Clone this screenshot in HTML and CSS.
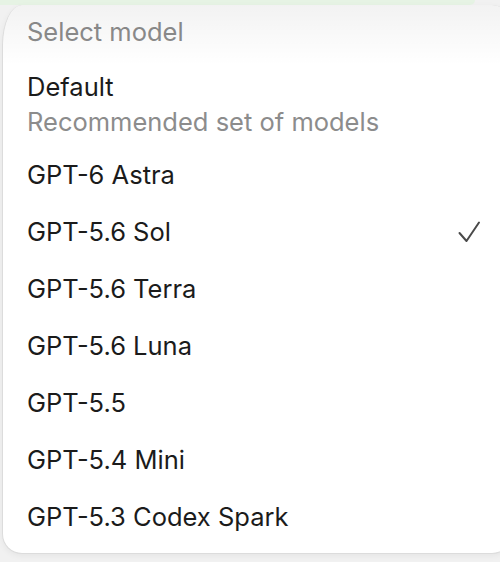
FILE: index.html
```html
<!DOCTYPE html>
<html>
<head>
<meta charset="utf-8">
<link rel="stylesheet" href="styles.css">
</head>
<body>
<div class="strip"></div>
<div class="panel">
  <div class="fade"></div>
  <div class="header">Select model</div>
  <div class="group">
    <div class="title">Default</div>
    <div class="sub">Recommended set of models</div>
  </div>
  <ul class="list">
    <li class="item">GPT-6 Astra</li>
    <li class="item selected">GPT-5.6 Sol
      <svg class="check" width="24" height="24" viewBox="0 0 24 24"><path d="M2.5 13 L9.5 21 L22 2.5" fill="none" stroke="#4a4a4a" stroke-width="2" stroke-linecap="round" stroke-linejoin="round"/></svg>
    </li>
    <li class="item">GPT-5.6 Terra</li>
    <li class="item">GPT-5.6 Luna</li>
    <li class="item">GPT-5.5</li>
    <li class="item">GPT-5.4 Mini</li>
    <li class="item">GPT-5.3 Codex Spark</li>
  </ul>
</div>
</body>
</html>
```
FILE: styles.css
```css
html, body {
  margin: 0;
  padding: 0;
  background: #f1f1f1;
  font-family: Inter, "Noto Sans", "Liberation Sans", sans-serif;
  width: 500px;
  height: 562px;
  overflow: hidden;
}
.strip {
  height: 5px;
  width: 475px;
  background: #e6f3e4;
  border-bottom-right-radius: 10px;
}
.panel {
  position: relative;
  margin-left: 2px;
  width: 510px;
  height: 549px;
  box-sizing: border-box;
  background: #ffffff;
  border: 1px solid #dcdcdc;
  border-top: none;
  border-radius: 20px;
  border-top-left-radius: 20px 40px;
  box-shadow: 0 2px 6px rgba(0,0,0,0.05);
  padding: 7px 0 0 24px;
  overflow: hidden;
}
.fade {
  position: absolute;
  left: 0;
  top: 0;
  right: 0;
  height: 60px;
  background: linear-gradient(to bottom, rgba(0,0,0,0.05), rgba(0,0,0,0));
  pointer-events: none;
}
.header {
  height: 40px;
  line-height: 40px;
  font-size: 25.5px;
  color: #8c8c8c;
}
.group {
  margin-top: 18px;
}
.title {
  height: 34px;
  line-height: 34px;
  font-size: 25.5px;
  color: #1b1b1b;
}
.sub {
  height: 36px;
  line-height: 36px;
  font-size: 25.5px;
  color: #8c8c8c;
}
.list {
  list-style: none;
  margin: 6px 0 0 0;
  padding: 0;
}
.item {
  height: 57px;
  display: flex;
  align-items: center;
  font-size: 25.5px;
  color: #1b1b1b;
}
.check {
  margin-left: auto;
  margin-right: 30px;
}
```
